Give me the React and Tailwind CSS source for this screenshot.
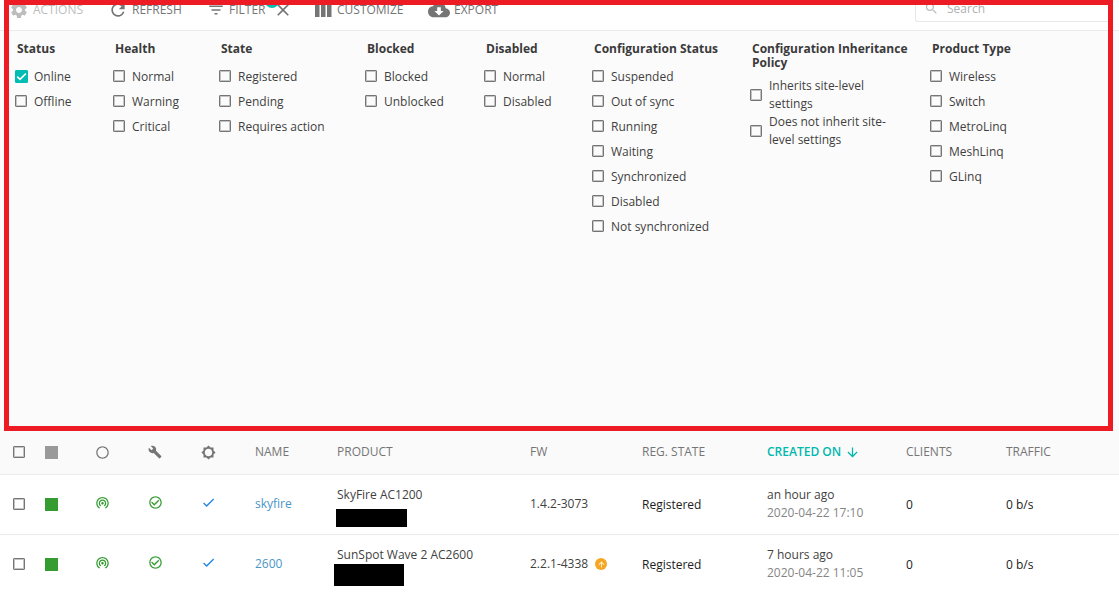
import React from "react";
import {
  MdSettings, MdRefresh, MdFilterList, MdClose, MdCloudDownload, MdSearch, MdBuild,
  MdBrightness5, MdWifiTethering, MdCheckCircleOutline, MdCheck, MdArrowDownward,
  MdRadioButtonUnchecked, MdArrowUpward,
} from "react-icons/md";

const filters = [
  { title: "Status", width: "w-[98px]", options: ["Online", "Offline"], checked: "Online" },
  { title: "Health", width: "w-[106px]", options: ["Normal", "Warning", "Critical"] },
  { title: "State", width: "w-[146px]", options: ["Registered", "Pending", "Requires action"] },
  { title: "Blocked", width: "w-[119px]", options: ["Blocked", "Unblocked"] },
  { title: "Disabled", width: "w-[108px]", options: ["Normal", "Disabled"] },
  {
    title: "Configuration Status",
    width: "w-[158px]",
    options: ["Suspended", "Out of sync", "Running", "Waiting", "Synchronized", "Disabled", "Not synchronized"],
  },
  {
    title: "Configuration Inheritance Policy",
    width: "w-[180px]",
    wrap: true,
    options: ["Inherits site-level settings", "Does not inherit site-level settings"],
  },
  { title: "Product Type", width: "w-[150px]", options: ["Wireless", "Switch", "MetroLinq", "MeshLinq", "GLinq"] },
];

const devices = [
  {
    name: "skyfire", product: "SkyFire AC1200", fw: "1.4.2-3073", created: "an hour ago", date: "2020-04-22 17:10",
    redaction: "-ml-px mt-[5px] h-[18px] w-[71px]",
  },
  {
    name: "2600", product: "SunSpot Wave 2 AC2600", fw: "2.2.1-4338", created: "7 hours ago", date: "2020-04-22 11:05",
    upgrade: true, redaction: "-ml-[3px] h-[22px] w-[70px]",
  },
];

function Checkbox({ id, label, defaultChecked }) {
  return (
    <span className="relative flex size-[13px] shrink-0">
      <input
        id={id}
        type="checkbox"
        aria-label={label}
        defaultChecked={defaultChecked}
        className="peer m-0 size-3 appearance-none rounded-[1px] border border-[#757575] bg-transparent shadow-[inset_0_0_0_1px_#c4c4c4] checked:size-[13px] checked:border-[#00bdb4] checked:bg-[#00bdb4] checked:shadow-none"
      />
      <svg viewBox="0 0 13 13" className="pointer-events-none absolute inset-0 hidden size-[13px] peer-checked:block" fill="none" stroke="#fff" strokeWidth="1.6">
        <path d="M2.2 6.6 5 9.4 10.8 3.6" />
      </svg>
    </span>
  );
}

function FilterGroup({ group }) {
  const prefix = group.title.replace(/\s+/g, "-").toLowerCase();
  return (
    <fieldset className={`${group.width} shrink-0`}>
      <legend className="pr-4 pl-[2px] text-[12px] leading-[14px] font-bold text-[#3a3a3a]">{group.title}</legend>
      <div className={group.wrap ? "mt-[7px] pr-5" : "mt-[8px]"}>
        {group.options.map((option) => {
          const id = `${prefix}-${option.replace(/\s+/g, "-").toLowerCase()}`;
          return (
            <div key={option} className={group.wrap ? "flex min-h-9 items-center gap-[6px]" : "flex h-[25px] items-center gap-[6px]"}>
              <Checkbox id={id} label={option} defaultChecked={group.checked === option} />
              <label htmlFor={id} className="leading-[18px]">{option}</label>
            </div>
          );
        })}
      </div>
    </fieldset>
  );
}

function ToolButton({ icon, children, className }) {
  return (
    <button type="button" className={`flex items-center gap-1 text-[12px] leading-4 ${className}`}>
      {icon}
      {children}
    </button>
  );
}

function Columns() {
  return (
    <svg width="18" height="14" viewBox="0 0 18 14" fill="currentColor">
      <path d="M0 0h4.500v14H0zM6 0h4.500v14H6zM12 0h4.500v14H12z" />
    </svg>
  );
}

function Toolbar() {
  return (
    <div className="-mt-[5px] flex h-5 items-center text-[#757575]">
      <div className="flex flex-1 items-center">
        <ToolButton className="w-[99px] text-[#bdbdbd]" icon={<MdSettings size={20} />}>ACTIONS</ToolButton>
        <ToolButton className="w-[99px]" icon={<MdRefresh size={20} />}>REFRESH</ToolButton>
        <ToolButton className="w-[66px]" icon={<MdFilterList size={18} />}>
          <span className="relative">
            FILTER
            <span className="absolute -top-[8px] left-[36px] size-[14px] rounded-full bg-[#00bdb4]" />
          </span>
        </ToolButton>
        <button type="button" aria-label="Clear filter" className="w-[42px]"><MdClose size={20} /></button>
        <ToolButton className="w-[113px]" icon={<Columns />}>CUSTOMIZE</ToolButton>
        <ToolButton icon={<MdCloudDownload size={22} />}>EXPORT</ToolButton>
      </div>
      <div className="mb-[2px] flex h-[26px] w-[193px] items-center gap-2 rounded-bl-[3px] border-b border-l border-[#e8e8e8] pl-2">
        <MdSearch size={15} className="text-[#bdbdbd]" />
        <input aria-label="Search" placeholder="Search" className="min-w-0 flex-1 bg-transparent text-[12px] outline-none placeholder:text-[#b0b0b0]" />
      </div>
    </div>
  );
}

function DeviceRow({ device }) {
  return (
    <tr className="h-[60px] border-b border-[#ebebeb] last:border-b-0">
      <td className="pl-[13px]"><Checkbox label={`Select ${device.name}`} /></td>
      <td><div className="size-[13px] bg-[#359c32]" /></td>
      <td><MdWifiTethering size={15} className="mb-1 text-[#359c32]" /></td>
      <td><MdCheckCircleOutline size={15} className="mb-1 text-[#359c32]" /></td>
      <td><MdCheck size={15} className="mb-1 text-[#2386e8]" /></td>
      <td><a href="#device" className="text-[#4a96c6]">{device.name}</a></td>
      <td className="pt-[10px] align-top">
        <div className="leading-[19px]">{device.product}</div>
        <div className={`bg-black ${device.redaction}`} />
      </td>
      <td>
        <div className="flex items-center gap-[7px]">
          {device.fw}
          {device.upgrade && (
            <span className="flex size-3 items-center justify-center rounded-full bg-[#f5a623] text-white"><MdArrowUpward size={9} /></span>
          )}
        </div>
      </td>
      <td className="pt-[2px] text-[#212121]">Registered</td>
      <td className="leading-[18px]">
        <div>{device.created}</div>
        <div className="text-[#858585]">{device.date}</div>
      </td>
      <td className="pt-[2px] text-[#212121]">0</td>
      <td className="pt-[2px] text-[#212121]">0 b/s</td>
    </tr>
  );
}

export default function App() {
  return (
    <div className="min-h-screen bg-white font-['Open_Sans',sans-serif] text-[12px] text-[#3f3f3f]">
      <div className="bg-[linear-gradient(to_bottom,#fff_30px,#ebebeb_30px,#ebebeb_31px,#fbfbfb_31px)] pr-[6px] pl-[4px]">
        <section className="overflow-hidden border-5 border-[#ed1c24]">
          <div className="flow-root h-[26px]"><Toolbar /></div>
          <div className="flex h-[395px] pt-[11px] pl-[6px]">
            {filters.map((group) => <FilterGroup key={group.title} group={group} />)}
          </div>
        </section>
      </div>
      <table className="w-full table-fixed border-collapse text-left">
        <colgroup>
          <col className="w-[45px]" />
          <col className="w-[50px]" />
          <col className="w-[53px]" />
          <col className="w-[53px]" />
          <col className="w-[54px]" />
          <col className="w-[82px]" />
          <col className="w-[193px]" />
          <col className="w-[112px]" />
          <col className="w-[125px]" />
          <col className="w-[139px]" />
          <col className="w-[100px]" />
          <col />
        </colgroup>
        <thead className="bg-[#fafafa] text-[#757575]">
          <tr className="h-[43px] border-b border-[#ebebeb] [&>th]:font-normal">
            <th className="pl-[13px]"><Checkbox label="Select all devices" /></th>
            <th><div className="size-[13px] bg-[#999]" /></th>
            <th><MdRadioButtonUnchecked size={15} /></th>
            <th><MdBuild size={14} /></th>
            <th><MdBrightness5 size={15} /></th>
            <th>NAME</th>
            <th>PRODUCT</th>
            <th>FW</th>
            <th>REG. STATE</th>
            <th aria-sort="descending" className="text-[#00b8ae]">
              <div className="flex items-center gap-1 font-semibold">CREATED ON <MdArrowDownward size={15} /></div>
            </th>
            <th>CLIENTS</th>
            <th>TRAFFIC</th>
          </tr>
        </thead>
        <tbody>
          {devices.map((device) => <DeviceRow key={device.name} device={device} />)}
        </tbody>
      </table>
    </div>
  );
}
